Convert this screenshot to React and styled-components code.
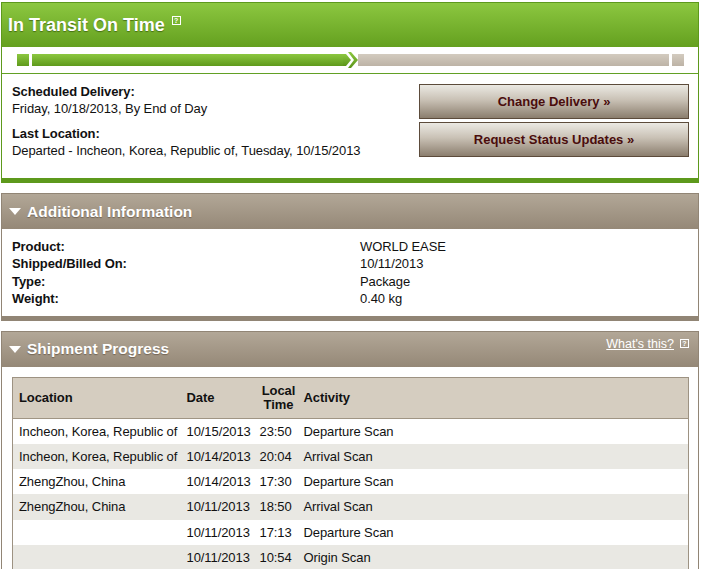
import React from 'react';
import styled, { createGlobalStyle } from 'styled-components';

const GlobalStyle = createGlobalStyle`
  body {
    margin: 0;
    background: #fff;
    font-family: "Liberation Sans", Arial, Helvetica, sans-serif;
    font-size: 13px;
    color: #111;
  }
`;

const Page = styled.div`
  width: 698px;
  padding: 2px 0 0 1px;
  display: flex;
  flex-direction: column;
  gap: 10px;
`;

const Panel = styled.section`
  border: 1px solid ${p => p.$edge};
  border-bottom: ${p => (p.$open ? '0' : `5px solid ${p.$edge}`)};
  background: #fff;
`;

const GreenHeader = styled.div`
  height: 44px;
  display: flex;
  align-items: center;
  padding-left: 6px;
  background: linear-gradient(#8cc740, #64a01f);
`;

const Title = styled.h1`
  margin: 0;
  font-size: 18px;
  font-weight: bold;
  color: #fff;
  text-shadow: 0 1px 1px rgba(40, 70, 0, 0.6);
`;

const Help = styled.span`
  display: inline-block;
  width: 7px;
  height: 7px;
  border: 1px solid ${p => p.$color || '#fff'};
  color: ${p => p.$color || '#fff'};
  font-size: 7px;
  line-height: 7px;
  text-align: center;
  font-weight: bold;
  margin-left: ${p => p.$gap || 7}px;
  position: relative;
  top: ${p => p.$lift || 0}px;
`;

const Track = styled.div`
  height: 26px;
  display: flex;
  align-items: center;
  padding: 0 14px 0 15px;
  border-bottom: 1px solid #62a024;
`;

const Seg = styled.div`
  height: 12px;
  width: ${p => (p.$w ? `${p.$w}px` : 'auto')};
  flex: ${p => (p.$w ? 'none' : '1')};
  margin-left: ${p => p.$ml || 0}px;
  background: ${p =>
    p.$done ? 'linear-gradient(#8cc740, #5f9a1c)' : 'linear-gradient(#d3cbbf, #bdb3a6)'};
`;

const Chevrons = () => (
  <svg width="15" height="18" viewBox="0 0 15 18" style={{ flex: 'none' }}>
    <defs>
      <linearGradient id="cg" x1="0" y1="0" x2="0" y2="1">
        <stop offset="0" stopColor="#8cc740" />
        <stop offset="1" stopColor="#5a9418" />
      </linearGradient>
    </defs>
    <polygon points="0,3 3,3 8,9 3,15 0,15 0,3" fill="url(#cg)" />
    <polygon points="5,1 8,1 15,9 8,17 5,17 11,9" fill="url(#cg)" />
  </svg>
);

const Summary = styled.div`
  height: 104px;
  display: flex;
  justify-content: space-between;
  padding: 9px 9px 0 10px;
  box-sizing: border-box;
`;

const Facts = styled.div`
  display: flex;
  flex-direction: column;
  gap: 8px;
  letter-spacing: -0.08px;
`;

const Fact = styled.div`
  line-height: 17px;
  & b {
    display: block;
  }
`;

const Actions = styled.div`
  width: 270px;
  margin-top: 1px;
  display: flex;
  flex-direction: column;
  gap: 3px;
`;

const Action = styled.button`
  height: 35px;
  border: 1px solid #5c4b3b;
  background: linear-gradient(#ebe9e3, #c9c1b5 45%, #8b7e6e);
  color: #4a0c0c;
  font-family: inherit;
  font-size: 13px;
  font-weight: bold;
  cursor: pointer;
`;

const BrownHeader = styled.div`
  height: 35px;
  display: flex;
  align-items: center;
  padding: 0 9px 0 7px;
  background: linear-gradient(#b2a797, #958877);
`;

const Heading = styled.h2`
  margin: 0;
  flex: 1;
  display: flex;
  align-items: center;
  gap: 6px;
  font-size: 15.5px;
  font-weight: bold;
  color: #fff;
  text-shadow: 0 1px 1px rgba(60, 45, 30, 0.45);
`;

const Caret = styled.span`
  width: 0;
  height: 0;
  border-left: 6px solid transparent;
  border-right: 6px solid transparent;
  border-top: 7px solid #fff;
`;

const HelpLink = styled.a`
  align-self: flex-start;
  margin-top: 5px;
  color: #fff;
  font-size: 12.5px;
  text-decoration: underline;
  display: flex;
  align-items: center;
`;

const InfoGrid = styled.dl`
  margin: 0;
  padding: 9px 10px 8px 10px;
  display: grid;
  grid-template-columns: 348px 1fr;
  line-height: 17.4px;
  letter-spacing: -0.08px;
  & dt {
    font-weight: bold;
  }
  & dd {
    margin: 0;
  }
`;

const TableWrap = styled.div`
  padding: 10px 9px 0 10px;
`;

const Table = styled.table`
  width: 100%;
  border-collapse: collapse;
  border: 1px solid #9d9282;
  table-layout: fixed;
  letter-spacing: -0.08px;
`;

const Th = styled.th`
  box-sizing: border-box;
  width: ${p => (p.$w ? `${p.$w}px` : 'auto')};
  height: 41px;
  padding: 0 0 0 6px;
  text-align: ${p => (p.$center ? 'center' : 'left')};
  font-weight: bold;
  line-height: 14px;
  background: #d5cdc0;
  border-bottom: 1px solid #a09584;
`;

const Row = styled.tr`
  height: 25.4px;
  background: ${p => (p.$alt ? '#e9e8e3' : '#fff')};
`;

const Td = styled.td`
  padding: 0 0 0 6px;
  white-space: nowrap;
`;

const events = [
  ['Incheon, Korea, Republic of', '10/15/2013', '23:50', 'Departure Scan'],
  ['Incheon, Korea, Republic of', '10/14/2013', '20:04', 'Arrival Scan'],
  ['ZhengZhou, China', '10/14/2013', '17:30', 'Departure Scan'],
  ['ZhengZhou, China', '10/11/2013', '18:50', 'Arrival Scan'],
  ['', '10/11/2013', '17:13', 'Departure Scan'],
  ['', '10/11/2013', '10:54', 'Origin Scan'],
];

export default function App() {
  return (
    <>
      <GlobalStyle />
      <Page>
        <Panel $edge="#5d991c">
          <GreenHeader>
            <Title>In Transit On Time</Title>
            <Help $lift={-5}>?</Help>
          </GreenHeader>
          <Track>
            <Seg $done $w={12} />
            <Seg $done $ml={3} />
            <Chevrons />
            <Seg />
            <Seg $w={12} $ml={3} />
          </Track>
          <Summary>
            <Facts>
              <Fact>
                <b>Scheduled Delivery:</b>
                Friday, 10/18/2013, By End of Day
              </Fact>
              <Fact>
                <b>Last Location:</b>
                Departed - Incheon, Korea, Republic of, Tuesday, 10/15/2013
              </Fact>
            </Facts>
            <Actions>
              <Action>Change Delivery »</Action>
              <Action>Request Status Updates »</Action>
            </Actions>
          </Summary>
        </Panel>

        <Panel $edge="#918575">
          <BrownHeader>
            <Heading>
              <Caret />
              Additional Information
            </Heading>
          </BrownHeader>
          <InfoGrid>
            <dt>Product:</dt>
            <dd>WORLD EASE</dd>
            <dt>Shipped/Billed On:</dt>
            <dd>10/11/2013</dd>
            <dt>Type:</dt>
            <dd>Package</dd>
            <dt>Weight:</dt>
            <dd>0.40 kg</dd>
          </InfoGrid>
        </Panel>

        <Panel $edge="#918575" $open>
          <BrownHeader>
            <Heading>
              <Caret />
              Shipment Progress
            </Heading>
            <HelpLink href="#">
              What's this?
              <Help $gap={6}>?</Help>
            </HelpLink>
          </BrownHeader>
          <TableWrap>
            <Table>
              <thead>
                <tr>
                  <Th $w={168}>Location</Th>
                  <Th $w={73}>Date</Th>
                  <Th $w={44} $center>Local Time</Th>
                  <Th>Activity</Th>
                </tr>
              </thead>
              <tbody>
                {events.map((e, i) => (
                  <Row key={i} $alt={i % 2 === 1}>
                    {e.map((c, j) => (
                      <Td key={j}>{c}</Td>
                    ))}
                  </Row>
                ))}
              </tbody>
            </Table>
          </TableWrap>
        </Panel>
      </Page>
    </>
  );
}
